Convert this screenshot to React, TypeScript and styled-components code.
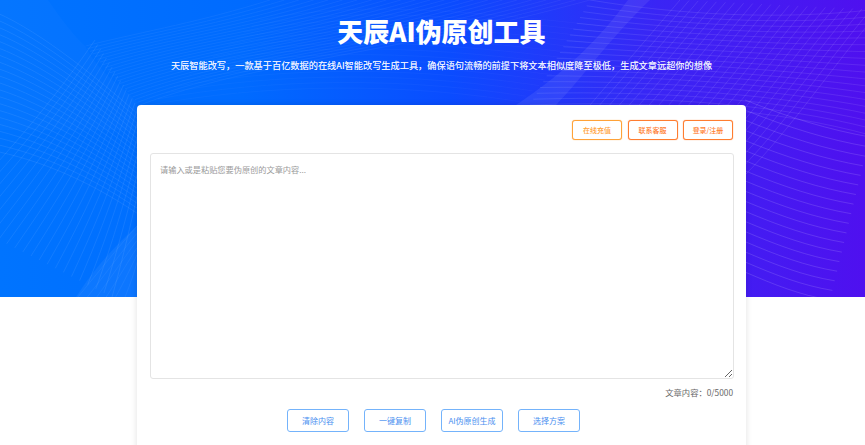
import React from "react";
import styled, { createGlobalStyle } from "styled-components";

const Global = createGlobalStyle`
  html, body { margin: 0; padding: 0; height: 100%; overflow: hidden; background: #fff; }
  #root { height: 100%; }
  * { box-sizing: border-box; }
`;
const FONT = `"Noto Sans CJK SC", "Noto Sans", sans-serif`;

const Page = styled.div`
  height: 445px;
  overflow: hidden;
  font-family: ${FONT};
  background: #fff;
`;
const Hero = styled.header`
  position: relative;
  height: 297px;
  overflow: hidden;
  padding: 14px 0 0 18px;
  text-align: center;
  color: #fff;
  background: linear-gradient(90deg, #0074ff 0%, #006bff 28%, #0a4cff 52%, #3a25f5 76%, #4f10ef 100%);
`;
const HeroArt = styled.svg`
  position: absolute;
  inset: 0;
  width: 865px;
  height: 297px;
`;
const Title = styled.h1`
  position: relative;
  margin: 0;
  font-size: 26px;
  line-height: 34px;
  font-weight: 900;
`;
const Subtitle = styled.p`
  position: relative;
  margin: 8px 0 0;
  font-size: 9.2px;
  line-height: 18px;
  color: #f1f3ff;
  text-shadow: 0 0 0.6px rgba(255, 255, 255, 0.7);
`;
const Card = styled.main`
  position: relative;
  width: 609px;
  height: 420px;
  margin: -192px 0 0 137px;
  padding: 15px 13px 0 13px;
  background: #fff;
  border-radius: 4px;
  box-shadow: 0 0 6px rgba(0, 0, 0, 0.12);
`;
const TopBar = styled.div`
  display: flex;
  justify-content: flex-end;
  gap: 5.5px;
`;
const TopButton = styled.button<{ $tone: string }>`
  width: 50px;
  height: 20px;
  padding: 0;
  font-family: inherit;
  font-size: 7px;
  font-weight: 500;
  background: #fff;
  border: 1px solid ${(p) => p.$tone};
  border-radius: 3px;
  box-shadow: 0 0 1px ${(p) => p.$tone};
  color: ${(p) => p.$tone};
`;
const Editor = styled.textarea`
  display: block;
  width: 584px;
  height: 226px;
  margin-top: 13px;
  padding: 6px 9px;
  font-family: inherit;
  font-size: 8.2px;
  line-height: 18px;
  border: 1px solid #e4e4e4;
  border-radius: 3px;
  outline: none;
  background: #fff;
  resize: vertical;
  &::placeholder { color: #9a9a9a; }
`;
const Counter = styled.div`
  width: 583px;
  margin-top: 6px;
  font-size: 8.3px;
  line-height: 14px;
  text-align: right;
  color: #666;
`;
const Actions = styled.div`
  display: flex;
  justify-content: center;
  gap: 15px;
  width: 584px;
  margin-top: 10px;
  padding-right: 17px;
`;
const ActionButton = styled.button`
  width: 62px;
  height: 23px;
  padding: 0;
  font-family: inherit;
  font-size: 8px;
  background: #fff;
  border: 1px solid #74b3fb;
  border-radius: 3px;
  color: #4a8ff0;
`;

type Pt = [number, number];
type Bez = [Pt, Pt, Pt, Pt];

function mesh(a: Bez, b: Bez, n: number): string {
  let d = "";
  for (let i = 0; i <= n; i++) {
    const t = i / n;
    const p = a.map((q, k) => [q[0] + (b[k][0] - q[0]) * t, q[1] + (b[k][1] - q[1]) * t]);
    d += `M${p[0][0].toFixed(1)} ${p[0][1].toFixed(1)}C${p[1][0].toFixed(1)} ${p[1][1].toFixed(1)} ${p[2][0].toFixed(1)} ${p[2][1].toFixed(1)} ${p[3][0].toFixed(1)} ${p[3][1].toFixed(1)}`;
  }
  return d;
}

const Lines = ({ a, b, n, w, o }: { a: Bez; b: Bez; n: number; w: number; o: number }) => (
  <path d={mesh(a, b, n)} fill="none" stroke="#fff" strokeWidth={w} opacity={o} />
);

const Art = () => (
  <HeroArt viewBox="0 0 865 297" aria-hidden="true">
    <defs>
      <clipPath id="topLeft"><path d="M0 0H48C62 20 74 36 85 46C100 75 125 88 137 102V240H0Z" /></clipPath>
      <clipPath id="topMid"><path d="M85 46C130 28 190 18 250 0H640L516 105H137C120 85 100 70 85 46Z" /></clipPath>
    </defs>
    <path d="M0 0H48C62 20 74 36 85 46C100 75 125 88 137 102V130H0Z" fill="#fff" opacity="0.02" />
    <path d="M137 226V297H76C90 275 110 250 137 226Z" fill="#fff" opacity="0.05" />
    <path d="M628 0C600 38 566 72 516 105H556C585 75 610 38 650 0Z" fill="#fff" opacity="0.07" />

    <g clipPath="url(#topLeft)">
      <Lines a={[[-10, 10], [30, 25], [90, 70], [150, 125]]} b={[[-10, 150], [40, 160], [90, 180], [150, 222]]} n={20} w={0.6} o={0.13} />
    </g>
    <Lines a={[[-50, 215], [-10, 170], [40, 120], [95, 40]]} b={[[112, 297], [122, 262], [132, 220], [152, 130]]} n={20} w={0.6} o={0.13} />
    <Lines a={[[78, 297], [100, 270], [120, 245], [137, 226]]} b={[[125, 297], [130, 285], [135, 270], [137, 262]]} n={5} w={0.5} o={0.1} />

    <g clipPath="url(#topMid)">
      <Lines a={[[85, 46], [150, 30], [200, 22], [270, 0]]} b={[[140, 105], [260, 60], [390, 55], [590, 0]]} n={22} w={0.5} o={0.1} />
      <Lines a={[[150, 105], [260, 85], [400, 80], [540, 105]]} b={[[260, 20], [360, 0], [460, 10], [640, 30]]} n={14} w={0.5} o={0.06} />
    </g>

    <Lines a={[[590, 0], [680, 15], [780, 20], [870, 10]]} b={[[530, 105], [660, 100], [780, 110], [870, 135]]} n={18} w={0.8} o={0.12} />
    <Lines a={[[590, 105], [620, 70], [650, 35], [680, 0]]} b={[[745, 175], [790, 130], [830, 70], [880, 10]]} n={22} w={0.8} o={0.12} />
    <Lines a={[[745, 100], [790, 118], [830, 130], [870, 137]]} b={[[745, 272], [775, 285], [800, 295], [830, 300]]} n={17} w={0.9} o={0.15} />
  </HeroArt>
);

export default function App() {
  return (
    <Page>
      <Global />
      <Hero>
        <Art />
        <Title>天辰AI伪原创工具</Title>
        <Subtitle>{"天辰智能改写\uFF0C一款基于百亿数据的在线AI智能改写生成工具\uFF0C确保语句流畅的前提下将文本相似度降至极低\uFF0C生成文章远超你的想像"}</Subtitle>
      </Hero>
      <Card>
        <TopBar>
          <TopButton $tone="#ffa238">在线充值</TopButton>
          <TopButton $tone="#ff7d30">联系客服</TopButton>
          <TopButton $tone="#ff7d30">登录/注册</TopButton>
        </TopBar>
        <Editor placeholder="请输入或是粘贴您要伪原创的文章内容..." />
        <Counter>{"文章内容\uFF1A0/5000"}</Counter>
        <Actions>
          <ActionButton>清除内容</ActionButton>
          <ActionButton>一键复制</ActionButton>
          <ActionButton>AI伪原创生成</ActionButton>
          <ActionButton>选择方案</ActionButton>
        </Actions>
      </Card>
    </Page>
  );
}
